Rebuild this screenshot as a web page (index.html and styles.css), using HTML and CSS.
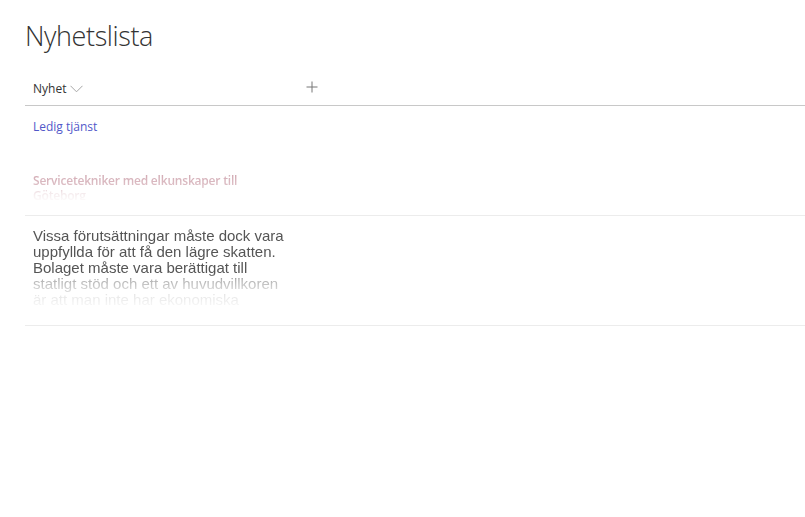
FILE: index.html
```html
<html>
<head>
<meta http-equiv="Content-Type" content="text/html; charset=UTF-8" />
<title>Nyhetslista</title>
<link rel="stylesheet" href="styles.css">
</head>
<body>

<div class="page">
  <h1 class="title">Nyhetslista</h1>

  <div class="list">
    <div class="header">
      <div class="col-name">
        Nyhet
        <svg class="chevron" width="13" height="8" viewBox="0 0 13 8"><path d="M0.5 0.8 L6.5 6.8 L12.5 0.8" fill="none" stroke="#a6a6a6" stroke-width="1"/></svg>
      </div>
      <div class="col-add">
        <svg width="12" height="12" viewBox="0 0 12 12"><path d="M6 0.5 V11.5 M0.5 6 H11.5" fill="none" stroke="#777" stroke-width="1"/></svg>
      </div>
    </div>

    <div class="row row-first">
      <a class="link" href="#">Ledig tjänst</a>
      <div class="teaser">Servicetekniker med elkunskaper till Göteborg</div>
    </div>

    <div class="row row-second">
      <div class="body-text">Vissa förutsättningar måste dock vara uppfyllda för att få den lägre skatten. Bolaget måste vara berättigat till statligt stöd och ett av huvudvillkoren är att man inte har ekonomiska svårigheter. Dessutom gäller reglerna bara för nyanställda.</div>
    </div>
  </div>
</div>

</body>
</html>
```

FILE: styles.css
```css
body {
	margin: 0;
	padding: 0;
	background: #FFF;
	font-family: "Open Sans", "Liberation Sans", Arial, sans-serif;
	color: #333;
}

.page {
	padding: 18px 0 0 25px;
}

.title {
	margin: 0;
	font-size: 27px;
	font-weight: 300;
	line-height: 36px;
	color: #333;
	letter-spacing: -0.4px;
}

.header {
	display: flex;
	align-items: center;
	height: 33px;
	margin-top: 18px;
	border-bottom: 1px solid #c8c8c8;
}

.col-name {
	display: flex;
	align-items: center;
	width: 273px;
	padding-left: 8px;
	font-size: 12px;
	color: #333;
}

.chevron {
	margin-left: 4px;
}

.col-add {
	display: flex;
	align-items: center;
	margin-top: -3px;
}

.row {
	box-sizing: border-box;
	padding-left: 8px;
	border-bottom: 1px solid #ececec;
}

.row-first {
	height: 110px;
	padding-top: 13px;
}

.link {
	display: block;
	font-size: 12px;
	line-height: 16px;
	color: #5158c9;
	text-decoration: none;
}

.teaser {
	width: 212px;
	height: 27px;
	margin-top: 38px;
	overflow: hidden;
	font-size: 12px;
	font-weight: 600;
	line-height: 15px;
	letter-spacing: -0.2px;
	color: #c999a4;
	-webkit-mask-image: linear-gradient(to bottom, rgba(0,0,0,0.85) 0, rgba(0,0,0,0.6) 50%, rgba(0,0,0,0.2) 75%, rgba(0,0,0,0.05) 100%);
	mask-image: linear-gradient(to bottom, rgba(0,0,0,0.85) 0, rgba(0,0,0,0.6) 50%, rgba(0,0,0,0.2) 75%, rgba(0,0,0,0.05) 100%);
}

.row-second {
	height: 110px;
	padding-top: 12px;
}

.body-text {
	width: 252px;
	height: 78px;
	overflow: hidden;
	font-family: "Liberation Sans", Arial, sans-serif;
	font-size: 15px;
	line-height: 16px;
	color: #555;
	-webkit-mask-image: linear-gradient(to bottom, rgba(0,0,0,1) 0, rgba(0,0,0,1) 58%, rgba(0,0,0,0.45) 66%, rgba(0,0,0,0.15) 85%, rgba(0,0,0,0.05) 100%);
	mask-image: linear-gradient(to bottom, rgba(0,0,0,1) 0, rgba(0,0,0,1) 58%, rgba(0,0,0,0.45) 66%, rgba(0,0,0,0.15) 85%, rgba(0,0,0,0.05) 100%);
}
```
